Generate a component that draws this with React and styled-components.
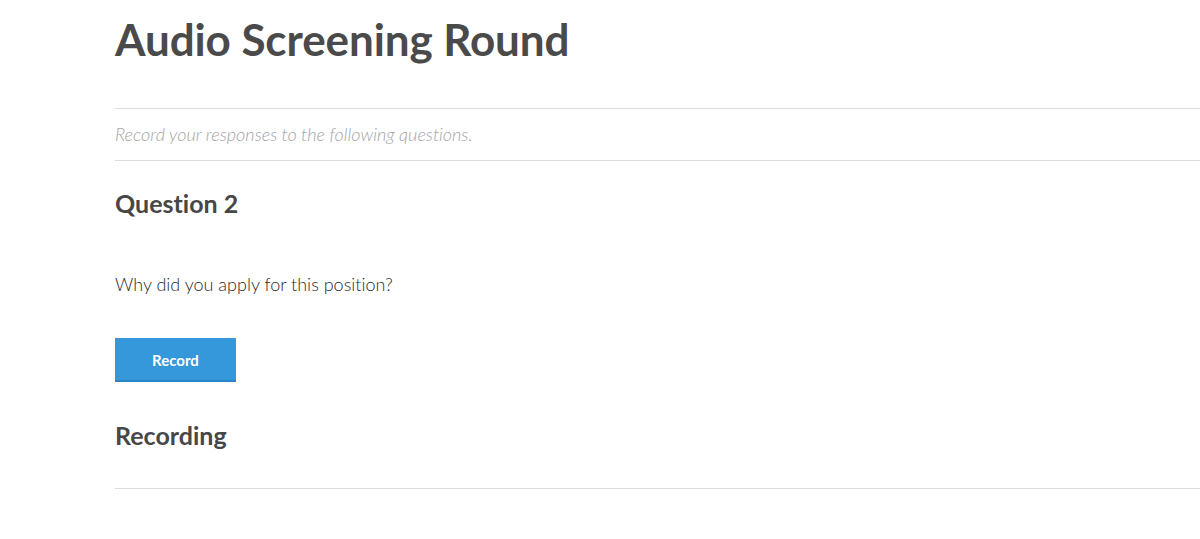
import React from "react";
import styled, { createGlobalStyle } from "styled-components";

const Global = createGlobalStyle`
  html, body { margin: 0; padding: 0; background: #fff; }
  body {
    font-family: Lato, "Open Sans", sans-serif;
    font-variant-ligatures: no-common-ligatures;
    overflow: hidden;
  }
`;

const Page = styled.main`
  padding: 0 0 0 115px;
  width: 1085px;
`;

const Title = styled.h1`
  margin: 0;
  padding-top: 13px;
  height: 108px;
  box-sizing: border-box;
  font-size: 44px;
  line-height: 52px;
  font-weight: 700;
  color: #4a4a4a;
  letter-spacing: -0.1px;
`;

const Rule = styled.hr`
  border: 0;
  border-top: 1px solid #dcdcdc;
  margin: 0;
`;

const Lead = styled.p`
  margin: 0;
  height: 51px;
  display: flex;
  align-items: center;
  padding-bottom: 1px;
  box-sizing: border-box;
  font-size: 18px;
  font-style: italic;
  font-weight: 300;
  color: #a3a3a3;
`;

const Heading = styled.h2`
  margin: 0;
  font-size: 25px;
  font-weight: 700;
  color: #474747;
  line-height: 30px;
`;

const Question = styled.p`
  margin: 0;
  font-size: 18px;
  font-weight: 300;
  color: #2a2a2a;
  line-height: 22px;
`;

const Button = styled.button`
  width: 121px;
  height: 44px;
  border: 0;
  border-bottom: 2px solid #2a85c6;
  background: #3498db;
  color: #fff;
  font-family: Lato, sans-serif;
  font-weight: 700;
  font-size: 15px;
  padding: 2px 0 0;
  border-radius: 0;
  cursor: pointer;
`;

const Section = styled.section`
  display: flex;
  flex-direction: column;
  align-items: flex-start;
  padding-top: ${(p) => p.$top}px;
  padding-bottom: ${(p) => p.$bottom}px;
`;

export default function App() {
  return (
    <>
      <Global />
      <Page>
        <Title>Audio Screening Round</Title>
        <Rule />
        <Lead>Record your responses to the following questions.</Lead>
        <Rule />
        <Section $top={27} $bottom={0}>
          <Heading>Question 2</Heading>
        </Section>
        <Section $top={55} $bottom={0}>
          <Question>Why did you apply for this position?</Question>
        </Section>
        <Section $top={43} $bottom={0}>
          <Button>Record</Button>
        </Section>
        <Section $top={38} $bottom={38}>
          <Heading>Recording</Heading>
        </Section>
        <Rule />
      </Page>
    </>
  );
}
